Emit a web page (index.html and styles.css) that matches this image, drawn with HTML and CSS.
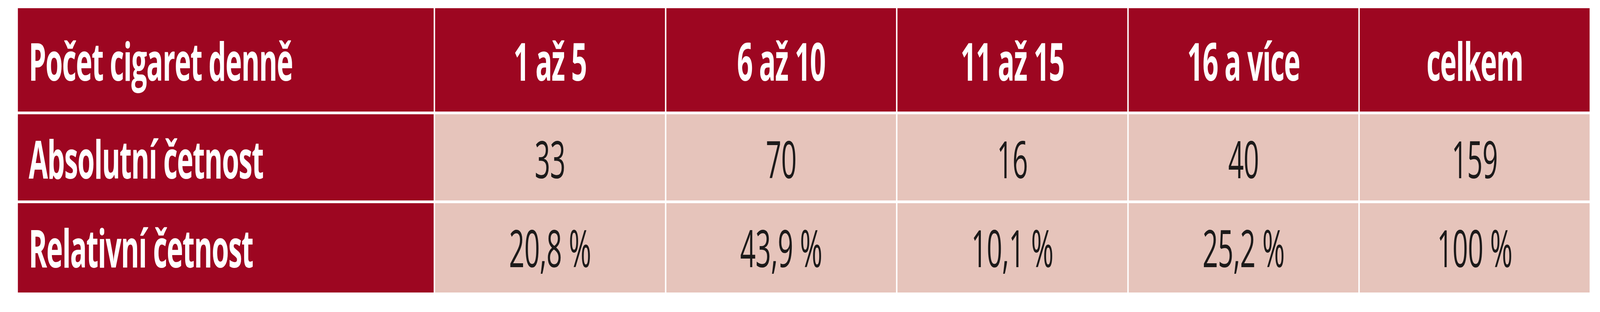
FILE: index.html
```html
<!DOCTYPE html>
<html lang="cs">
<head>
<meta charset="utf-8">
<title>Počet cigaret denně</title>
<link rel="stylesheet" href="styles.css">
</head>
<body>
<div class="frame">
  <div class="stage">
    <div class="table">
      <div class="cell head label">Počet cigaret denně</div>
      <div class="cell head">1 až 5</div>
      <div class="cell head">6 až 10</div>
      <div class="cell head">11 až 15</div>
      <div class="cell head">16 a více</div>
      <div class="cell head">celkem</div>

      <div class="cell row label">Absolutní četnost</div>
      <div class="cell row data">33</div>
      <div class="cell row data">70</div>
      <div class="cell row data">16</div>
      <div class="cell row data">40</div>
      <div class="cell row data">159</div>

      <div class="cell row label">Relativní četnost</div>
      <div class="cell row data">20,8 %</div>
      <div class="cell row data">43,9 %</div>
      <div class="cell row data">10,1 %</div>
      <div class="cell row data">25,2 %</div>
      <div class="cell row data">100 %</div>
    </div>
  </div>
</div>
<script src="script.js"></script>
</body>
</html>
```

FILE: styles.css
```css
html, body {
  margin: 0;
  padding: 0;
  background: #ffffff;
  overflow: hidden;
}

body {
  font-family: "Open Sans", "Noto Sans", "DejaVu Sans", sans-serif;
}

.frame {
  width: 100%;
  height: 800px;
  overflow: hidden;
  position: relative;
}

.stage {
  width: 7700px;
  height: 800px;
  padding: 21px 0 0 86px;
  box-sizing: border-box;
  transform: scaleX(var(--sx, 1));
  transform-origin: 0 0;
}

.table {
  width: 7564px;
  display: grid;
  grid-template-columns: 2001px repeat(5, 1fr);
  grid-template-rows: 264.5px 221.5px 228.5px;
  column-gap: 7px;
  row-gap: 7px;
}

.cell {
  font-size: 131px;
  line-height: 1;
  text-align: center;
  white-space: nowrap;
  background: #e6c4bb;
  color: #1c1a1a;
  font-weight: 400;
  padding-top: 48px;
  box-sizing: border-box;
}

.head {
  background: #9d0621;
  color: #ffffff;
  font-weight: 700;
  font-size: 134px;
  letter-spacing: -3px;
  padding-top: 67px;
}

.label {
  background: #9d0621;
  color: #ffffff;
  font-weight: 700;
  font-size: 134px;
  letter-spacing: -3px;
  text-align: left;
  padding-left: 52px;
}

.row.label {
  padding-top: 46px;
}

.data {
  letter-spacing: -1px;
}
```

FILE: script.js
```js
(function () {
  function fit() {
    var w = document.documentElement.clientWidth || window.innerWidth || 7700;
    document.documentElement.style.setProperty('--sx', String(w / 7700));
  }
  fit();
  window.addEventListener('resize', fit);
})();
```
